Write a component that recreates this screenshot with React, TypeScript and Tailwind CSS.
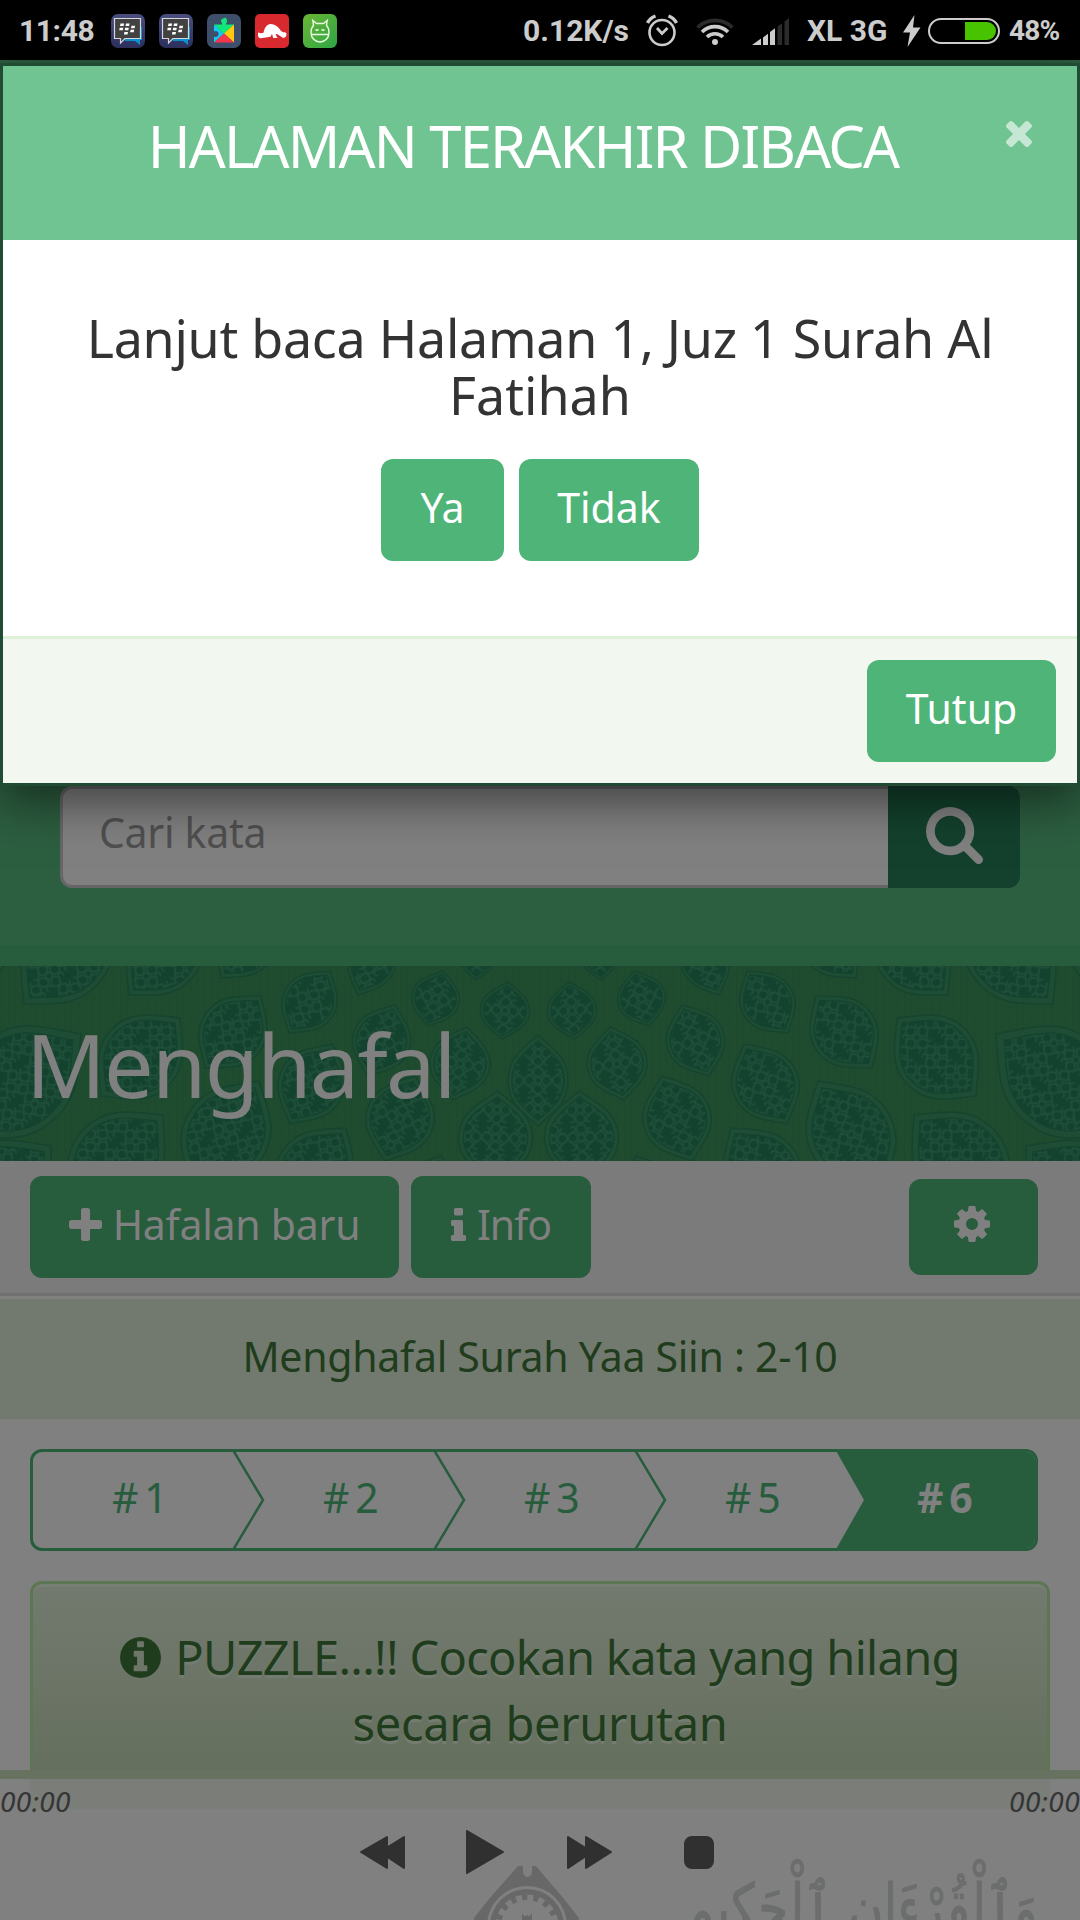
import type { ReactNode } from "react";

const glyphs = {
  plus: { box: "192 128 1408 1408", d: "M1600 736v192q0 40-28 68t-68 28h-416v416q0 40-28 68t-68 28h-192q-40 0-68-28t-28-68v-416h-416q-40 0-68-28t-28-68v-192q0-40 28-68t68-28h416v-416q0-40 28-68t68-28h192q40 0 68 28t28 68v416h416q40 0 68 28t28 68z" },
  times: { box: "302 366 1188 1188", d: "M1490 1322q0 40-28 68l-136 136q-28 28-68 28t-68-28l-294-294-294 294q-28 28-68 28t-68-28l-136-136q-28-28-28-68t28-68l294-294-294-294q-28-28-28-68t28-68l136-136q28-28 68-28t68 28l294 294 294-294q28-28 68-28t68 28l136 136q28 28 28 68t-28 68l-294 294 294 294q28 28 28 68z" },
  search: { box: "64 128 1664 1664", d: "M1216 832q0-185-131.5-316.5t-316.5-131.5-316.5 131.5-131.5 316.5 131.5 316.5 316.5 131.5 316.5-131.5 131.5-316.5zm512 832q0 52-38 90t-90 38q-54 0-90-38l-343-342q-179 124-399 124-143 0-273.5-55.5t-225-150-150-225-55.5-273.5 55.5-273.5 150-225 225-150 273.5-55.5 273.5 55.5 225 150 150 225 55.5 273.5q0 220-124 399l343 343q37 37 37 90z" },
  info: { box: "576 128 640 1408", d: "M1216 1344v128q0 26-19 45t-45 19h-512q-26 0-45-19t-19-45v-128q0-26 19-45t45-19h64v-384h-64q-26 0-45-19t-19-45v-128q0-26 19-45t45-19h384q26 0 45 19t19 45v576h64q26 0 45 19t19 45zm-128-1152v192q0 26-19 45t-45 19h-256q-26 0-45-19t-19-45v-192q0-26 19-45t45-19h256q26 0 45 19t19 45z" },
  infoCircle: { box: "128 128 1536 1536", d: "M1152 1376v-160q0-14-9-23t-23-9h-96v-512q0-14-9-23t-23-9h-320q-14 0-23 9t-9 23v160q0 14 9 23t23 9h96v320h-96q-14 0-23 9t-9 23v160q0 14 9 23t23 9h448q14 0 23-9t9-23zm-128-896v-160q0-14-9-23t-23-9h-192q-14 0-23 9t-9 23v160q0 14 9 23t23 9h192q14 0 23-9t9-23zm640 416q0 209-103 385.5t-279.5 279.5-385.5 103-385.5-103-279.5-279.5-103-385.5 103-385.5 279.5-279.5 385.5-103 385.5 103 279.5 279.5 103 385.5z" },
  cog: { box: "128 128 1536 1536", d: "M1152 896q0-106-75-181t-181-75-181 75-75 181 75 181 181 75 181-75 75-181zm512-109v222q0 12-8 23t-20 13l-185 28q-19 54-39 91 35 50 107 138 10 12 10 25t-9 23q-27 37-99 108t-94 71q-12 0-26-9l-138-108q-44 23-91 38-16 136-29 186-7 28-36 28h-222q-14 0-24.5-8.5t-11.5-21.5l-28-184q-49-16-90-37l-141 107q-10 9-25 9-14 0-25-11-126-114-165-168-7-10-7-23 0-12 8-23 15-21 51-66.5t54-70.5q-27-50-41-99l-183-27q-13-2-21-12.5t-8-23.5v-222q0-12 8-23t19-13l186-28q14-46 39-92-40-57-107-138-10-12-10-24 0-10 9-23 26-36 98.5-107.5t94.5-71.5q13 0 26 10l138 107q44-23 91-38 16-136 29-186 7-28 36-28h222q14 0 24.5 8.5t11.5 21.5l28 184q49 16 90 37l142-107q9-9 24-9 13 0 25 10 129 119 165 170 7 8 7 22 0 12-8 23-15 21-51 66.5t-54 70.5q26 50 41 98l183 28q13 2 21 12.5t8 23.5z" },
};

function Glyph({ name, className }: { name: keyof typeof glyphs; className: string }) {
  return (
    <svg viewBox={glyphs[name].box} className={className} fill="currentColor" preserveAspectRatio="none">
      <path d={glyphs[name].d} />
    </svg>
  );
}

function BbmIcon() {
  return (
    <svg viewBox="0 0 34 34" className="size-[34px]">
      <defs>
        <linearGradient id="bbm" x2="0" y2="1">
          <stop stopColor="#4a4d80" />
          <stop offset="1" stopColor="#2b2f5a" />
        </linearGradient>
      </defs>
      <rect width="34" height="34" rx="7" fill="url(#bbm)" />
      <path d="M27 13h4v13h-2v5l-5-4H14v-3h13z" fill="#0a8fd0" />
      <path d="M3.500 4.500h26v20H14L9.500 29v-4.500h-6z" fill="#424242" stroke="#d6d6d6" strokeWidth="1.200" />
      <path d="M9.500 9.500h3.600l-.5 2.500H9zm5.500 0h3.600l-.5 2.500h-3.600zM8.700 13.800h3.600l-.5 2.500H8.200zm5.500 0h3.600l-.5 2.500h-3.600zm-.8 4.200H17l-.5 2.500h-3.600zM20.500 11.800h3.600l-.5 2.400H20zm-.9 4h3.600l-.5 2.400h-3.600z" fill="#fff" />
    </svg>
  );
}

function PlayServicesIcon() {
  return (
    <svg viewBox="0 0 34 34" className="size-[34px]">
      <rect width="34" height="34" rx="7" fill="#3d4f6b" />
      <path d="M7 10.500l10 9-10 9V22.500a3 3 0 1 0 0-5z" fill="#12c8f5" />
      <path d="M7 10.500h8V9q-1-1-1-2.500T17 4t3 2.500T19 9v1.500h8L17 20z" fill="#0fe878" />
      <path d="M27 10.500v18l-10-9z" fill="#ffc90e" />
      <path d="M7 28.500l10-9 10 9z" fill="#f5374c" />
    </svg>
  );
}

function PrayerIcon() {
  return (
    <svg viewBox="0 0 34 34" className="size-[34px]">
      <rect width="34" height="34" rx="5" fill="#d8292f" />
      <path d="M3 18.500l3 .8 2.500-.5C9.500 13.500 12 10 15.500 10c4.500 0 8 3 10.500 7 2 1.200 2.500 1.500 4 1.200 1.300.3 1.800 1.500 1.300 3.200-.5 1.800-1.800 2.600-3.500 2.400L22 20l-1.500.3 2 3.700h-4.300L17 20l-1.500 2.700L6 24.300c-2 0-3-1.300-3-3z" fill="#fff" />
    </svg>
  );
}

function AndroidIcon() {
  return (
    <svg viewBox="0 0 34 34" className="size-[34px]">
      <defs>
        <linearGradient id="droid" x2="1" y2="1">
          <stop stopColor="#6ab536" />
          <stop offset="1" stopColor="#2ea644" />
        </linearGradient>
      </defs>
      <rect width="34" height="34" rx="6" fill="url(#droid)" />
      <path d="M8 18.500c0-3 1-5.500 2.500-7l-.7-5 3.700 3h7l3.700-3-.7 5c1.500 1.500 2.500 4 2.500 7 0 5.500-4 9.500-9 9.500s-9-4-9-9.500zM8 20.500h18" fill="none" stroke="#eafbe3" strokeWidth="1.400" />
      <path d="M12.500 15.200h3v1.600h-3zm6 0h3v1.600h-3z" fill="#fff" />
    </svg>
  );
}

function StatusBar() {
  return (
    <div className="flex h-[60px] items-center bg-black pt-px pr-[18px] pl-[19px] font-['Roboto',sans-serif] text-[30px] font-bold text-[#cccccc]">
      <span className="w-[92px] tracking-[-0.400px]">11:48</span>
      <div className="flex items-center gap-[14px]">
        <BbmIcon />
        <BbmIcon />
        <PlayServicesIcon />
        <PrayerIcon />
        <AndroidIcon />
      </div>
      <div className="ml-auto flex items-center">
        <span className="w-[123px]">0.12K/s</span>
        <svg viewBox="0 0 32 32" className="h-[33px] w-8" fill="none" stroke="currentColor">
          <circle cx="16" cy="18" r="12.500" strokeWidth="2.600" />
          <path d="M11 13.500l5 5.500 5.500-5.500" strokeWidth="2.800" />
          <path d="M1.500 8.500Q4 3.500 9.500 1.500M30.500 8.500Q28 3.500 22.500 1.500" strokeWidth="3.400" />
        </svg>
        <svg viewBox="0 0 38 30" className="ml-[18px] h-[30px] w-[38px]" fill="none" strokeWidth="3.600">
          <path d="M1.500 11.500a25 25 0 0 1 35 0" stroke="#2b2b2b" />
          <path d="M6 16a18.500 18.500 0 0 1 26 0M11 21a11.500 11.500 0 0 1 16 0" stroke="#ccc" />
          <circle cx="19" cy="26" r="3" fill="#ccc" stroke="none" />
        </svg>
        <svg viewBox="0 0 37 30" className="ml-[18px] h-[30px] w-[37px]">
          <path d="M0 29l9-6.500V29zM11 21.500l5-3.700V29h-5zM18 16l5-3.700V29h-5z" fill="#ccc" />
          <path d="M25.500 10.500l4.500-3.300V29h-4.500zM32.500 5.500L37 2v27h-4.500z" fill="#2b2b2b" />
        </svg>
        <span className="ml-[18px] w-[96px]">XL 3G</span>
        <svg viewBox="0 0 18 32" className="h-8 w-[18px]" fill="currentColor">
          <path d="M11.500 0L0 17.500h7L4.500 32 17.500 12.500H10z" />
        </svg>
        <div className="ml-[7px] flex h-[26px] w-[72px] justify-end rounded-full border-2 border-[#ccc] p-[2px]">
          <div className="w-[31px] rounded-r-full bg-[#47c300]" />
        </div>
        <span className="ml-[9px] w-[53px] text-[28px] tracking-[-0.800px]">48%</span>
      </div>
    </div>
  );
}

type Leaf = [number, number, number, number, number];

/* Tip-to-tip axis (x1, y1, x2, y2) and width of each ornament in the right half. */
const leaves: Leaf[] = [
  [569, 16, 575, 73, 49], [634, 5, 649, 60, 48], [610, 61, 624, 134, 60], [682, 39, 709, 110, 58],
  [579, 125, 584, 218, 74], [662, 110, 692, 195, 68], [747, 5, 788, 67, 54], [744, 78, 787, 158, 66],
  [816, 30, 872, 102, 66], [818, 115, 884, 222, 86], [897, 52, 976, 130, 80], [996, 68, 1122, 164, 104],
  [914, 149, 1008, 240, 90], [731, 162, 795, 250, 76], [690, -40, 719, 29, 48], [876, -50, 948, 29, 70],
  [966, -60, 1053, 38, 84], [800, -55, 856, 12, 54], [1026, 180, 1130, 270, 96], [1070, -70, 1165, 40, 90],
  [598, -40, 601, 14, 40], [636, 190, 660, 262, 60],
];

function Ornament({ leaf, mirrored }: { leaf: Leaf; mirrored?: boolean }) {
  const [x1, y1, x2, y2, width] = leaf;
  const half = Math.hypot(x2 - x1, y2 - y1) / 2;
  const angle = (Math.atan2(y2 - y1, x2 - x1) * 180) / Math.PI - 90;
  const w = width / 2;
  const place = `translate(${(x1 + x2) / 2} ${(y1 + y2) / 2}) rotate(${angle})`;
  const d = `M0 ${-half}C${w * 0.45} ${-half * 0.72} ${w} ${-half * 0.52} ${w} 0S${w * 0.45} ${half * 0.72} 0 ${half}C${-w * 0.45} ${half * 0.72} ${-w} ${half * 0.52} ${-w} 0S${-w * 0.45} ${-half * 0.72} 0 ${-half}z`;
  return (
    <g transform={mirrored ? `translate(1077 0) scale(-1 1) ${place}` : place}>
      <path d={d} fill="#1e4c35" stroke="#16452f" strokeWidth="1.500" />
      <path d={d} transform="scale(.87)" fill="url(#arabesque)" stroke="#14432e" strokeWidth="1.500" />
    </g>
  );
}

function OrnamentBackdrop() {
  return (
    <svg viewBox="0 0 1080 195" className="absolute inset-0 h-full w-full">
      <defs>
        <pattern id="arabesque" width="32" height="32" patternUnits="userSpaceOnUse" x="-16" y="-16">
          <rect width="32" height="32" fill="#13432f" />
          <g fill="none" stroke="#1f4f39" strokeWidth="2">
            <circle cx="16" cy="16" r="4" />
            <path d="M16 12Q9 9 11 3q7-5 10 1t-5 8M16 20q7 3 5 9-7 5-10-1t5-8M12 16Q9 23 3 21q-5-7 1-10t8 5M20 16q3-7 9-5 5 7-1 10t-8-5" />
            <path d="M4 5q3-4 5 0T5 9M27 23q-3 0-4 4t4 3M5 23q4 0 4 4t-5 3M27 5q-4 0-3 4t4 0" />
          </g>
        </pattern>
        <pattern id="rays" width="7" height="9" patternUnits="userSpaceOnUse">
          <path d="M1 0q2 4 0 9" stroke="#1c482e" strokeWidth="1" fill="none" />
        </pattern>
      </defs>
      <rect width="1080" height="195" fill="#1f4b2e" />
      <rect width="1080" height="195" fill="url(#rays)" />
      {leaves.map((leaf, i) => (
        <g key={i}>
          <Ornament leaf={leaf} />
          <Ornament leaf={leaf} mirrored />
        </g>
      ))}
      <Ornament leaf={[538, 69, 538, 160, 60]} />
    </svg>
  );
}

function Button({ className, children }: { className: string; children: ReactNode }) {
  return (
    <button className={`flex h-[102px] items-center justify-center rounded-xl pb-[6px] text-[41px] leading-none ${className}`}>
      {children}
    </button>
  );
}

function Steps() {
  const steps = ["# 1", "# 2", "# 3", "# 5"];
  return (
    <div className="relative mx-[30px] mt-[30px] flex h-[102px] w-[1008px] overflow-hidden rounded-xl border-[3px] border-[#275c3c] text-[41px] leading-none tracking-[-2.500px] text-[#275c3c]">
      {steps.map((step, i) => (
        <div
          key={step}
          className={
            i === 0
              ? "flex w-[201px] shrink-0 items-center pb-[6px] pl-[79px]"
              : "flex w-[201px] shrink-0 items-center pb-[6px] pl-[89px]"
          }
        >
          {step}
        </div>
      ))}
      <div className="flex flex-1 items-center pb-[6px] pl-[80px] font-bold text-[#808080]">
        <span className="relative z-10">{"# 6"}</span>
      </div>
      <svg viewBox="0 0 1008 102" className="absolute -top-[3px] -left-[3px] h-[102px] w-[1008px]" fill="none">
        <path d="M805 0H1008V102H805L834 51z" fill="#275c3c" />
        <path d="M203 1L233 51 203 101M404 1L434 51 404 101M605 1L635 51 605 101" stroke="#275c3c" strokeWidth="2.500" />
      </svg>
    </div>
  );
}

function Page() {
  return (
    <div className="h-[1860px] bg-[#808080]">
      <div className="h-[885px] bg-[#2c5e40] px-[60px] pt-[726px]">
        <div className="flex h-[102px]">
          <div className="flex w-[828px] items-center rounded-l-xl border-[3px] border-r-0 border-[#666] bg-[#808080] pb-[10px] pl-[36px] text-[41px] leading-none tracking-[-0.300px] text-[#4f4f4f]">
            Cari kata
          </div>
          <div className="flex w-[132px] items-center justify-center rounded-r-xl bg-[#13412d] pb-1 text-[#808080]">
            <Glyph name="search" className="size-[57px]" />
          </div>
        </div>
      </div>
      <div className="h-[21px] bg-[#275c3c]" />
      <div className="relative h-[195px] overflow-hidden">
        <OrnamentBackdrop />
        <h1 className="relative pt-[38px] pl-[26px] text-[88px] leading-[120px] tracking-[-1.700px] text-[#808080]">
          Menghafal
        </h1>
      </div>
      <div className="flex h-[135px] border-b-[3px] border-[#707070] bg-[#7b7b7b] pt-[15px] pr-[42px] pl-[30px] text-[#808080]">
        <Button className="w-[369px] bg-[#275c3c]">
          <Glyph name="plus" className="mr-[11px] size-[33px]" />
          <span className="tracking-[-0.250px]">Hafalan baru</span>
        </Button>
        <Button className="ml-3 w-[180px] bg-[#275c3c]">
          <Glyph name="info" className="mr-[11px] h-[33px] w-[15px]" />
          <span className="tracking-[-1px]">Info</span>
        </Button>
        <button className="mt-[3px] ml-auto flex h-24 w-[129px] items-center justify-center rounded-xl bg-[#275c3c] pr-[3px] pb-[6px]">
          <Glyph name="cog" className="size-9" />
        </button>
      </div>
      <div className="mt-[3px] flex h-[120px] items-center justify-center bg-[#72796e] pb-[6px] text-[41px] leading-none tracking-[-0.260px] text-[#1f3c1c]">
        <span>Menghafal Surah Yaa Siin : 2-10</span>
      </div>
      <Steps />
      <div className="mx-[30px] mt-[30px] h-[228px] w-[1020px] rounded-xl border-[3px] border-[#5c7553] bg-linear-to-b from-[#727a6f] to-[#66705e] to-[82%] pt-[40px] text-center text-[47px] leading-[66px] text-[#1f3c1c] shadow-[inset_0_3px_0_#777e74] [text-shadow:0_3px_0_#747c70]">
        <p className="flex items-center justify-center tracking-[-0.700px]">
          <Glyph name="infoCircle" className="mr-[14px] size-[41px]" />
          PUZZLE...!! Cocokan kata yang hilang
        </p>
        <p className="tracking-[-0.300px]">secara berurutan</p>
      </div>
    </div>
  );
}

function Player() {
  return (
    <div className="absolute inset-x-0 bottom-0 h-[150px] overflow-hidden">
      <div className="h-[9px] bg-[#677360]" />
      <div className="h-[141px] bg-[#808080]">
        <div className="mx-[30px] h-[30px] border-x-[3px] border-b-[3px] border-[#7a7f78] bg-[#7b7d79]" />
      </div>
      <div className="absolute inset-x-0 top-[11px] flex justify-between text-[28px] leading-10 tracking-[0.400px] text-[#353535] italic">
        <span>00:00</span>
        <span>00:00</span>
      </div>
      <svg viewBox="0 0 1080 150" className="absolute inset-0 h-full w-full">
        <g fill="#686868">
          <path d="M518 96h18l28 33 15 19v8H474v-8l15-19z" />
          <circle cx="527" cy="156" r="40" fill="#808080" />
          <circle cx="527" cy="156" r="37" />
          <circle cx="527" cy="156" r="28" fill="none" stroke="#808080" strokeWidth="7" strokeDasharray="6 5" />
          <circle cx="527" cy="156" r="26" fill="#808080" />
          <path d="M523 96v6a4.500 5 0 0 0 9 0v-6z" fill="#808080" />
          <path d="M522 143q2 5 5 2 3 3 5-2v7h-10z" />
        </g>
        <g transform="translate(1038 161) scale(.735 1)">
          <text direction="rtl" fontSize="66" fill="#6b6e6d" stroke="#6b6e6d" strokeWidth="1" className="font-['DejaVu_Sans',sans-serif]">
            وَٱلْقُرْءَانِ ٱلْحَكِيمِ
          </text>
        </g>
        <g fill="#303030" stroke="#303030" strokeWidth="2" strokeLinejoin="round">
          <path d="M361 82l26-15v31zM380 82l24-15v31z" />
          <path d="M467 61l36 21-36 21z" />
          <path d="M611 82L586 67v31zM592 82L568 67v31z" />
          <rect x="685" y="67" width="28" height="31" rx="7" />
        </g>
      </svg>
    </div>
  );
}

function LastReadDialog() {
  return (
    <div className="absolute inset-x-0 top-[63px] h-[723px] border-[3px] border-[#214b33] bg-white shadow-[0_15px_45px_rgba(0,0,0,0.5)]">
      <div className="relative h-[174px] bg-[#70c492] pr-[34px] text-center text-[58px] leading-[80px] tracking-[-1.840px] text-white">
        <h2 className="pt-[40px]">HALAMAN TERAKHIR DIBACA</h2>
        <Glyph name="times" className="absolute top-[55px] right-[45px] size-[26px] text-[#c6e7d3]" />
      </div>
      <div className="h-[396px] pt-[69px] text-center text-[52px] leading-[57px] text-[#333]">
        <p className="tracking-[-0.260px]">Lanjut baca Halaman 1, Juz 1 Surah Al</p>
        <p>Fatihah</p>
        <div className="mt-[36px] flex justify-center gap-[15px] text-white">
          <Button className="w-[123px] bg-[#4eb478]">Ya</Button>
          <Button className="w-[180px] bg-[#4eb478]">Tidak</Button>
        </div>
      </div>
      <div className="flex h-[147px] justify-end border-t-[3px] border-[#dff0d8] bg-[#f2f7ef] pt-[21px] pr-[21px] text-white">
        <Button className="w-[189px] bg-[#4eb478]">Tutup</Button>
      </div>
    </div>
  );
}

export default function App() {
  return (
    <div className="relative h-[1920px] w-[1080px] overflow-hidden bg-[#808080] font-['Noto_Sans',sans-serif]">
      <StatusBar />
      <Page />
      <Player />
      <div className="absolute inset-x-0 top-[60px] h-[1860px] overflow-hidden">
        <div className="absolute inset-x-0 -top-[60px] h-[1920px]">
          <LastReadDialog />
        </div>
      </div>
    </div>
  );
}
